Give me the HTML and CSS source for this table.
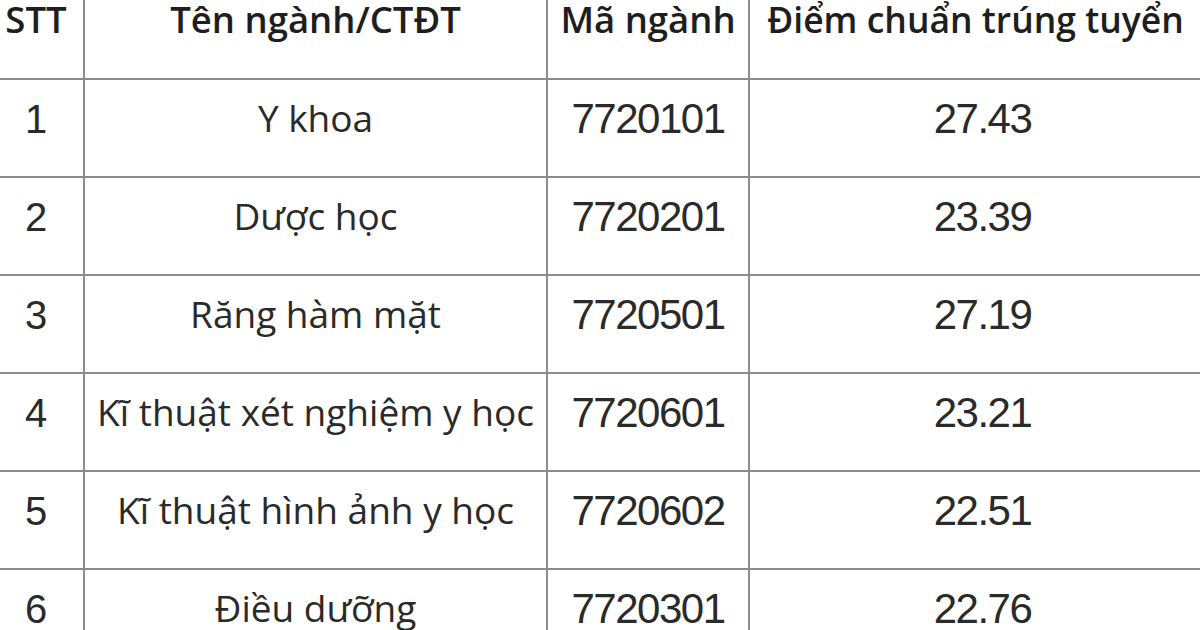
FILE: index.html
```html
<!DOCTYPE html>
<html lang="vi">
<head>
<meta charset="utf-8">
<link rel="stylesheet" href="styles.css">
</head>
<body>
<table class="scores">
  <colgroup>
    <col class="c-stt"><col class="c-name"><col class="c-code"><col class="c-score">
  </colgroup>
  <thead>
    <tr><th>STT</th><th>Tên ngành/CTĐT</th><th>Mã ngành</th><th class="score-head">Điểm chuẩn trúng tuyển</th></tr>
  </thead>
  <tbody>
    <tr><td>1</td><td class="name">Y khoa</td><td class="num">7720101</td><td class="num">27.43</td></tr>
    <tr><td>2</td><td class="name">Dược học</td><td class="num">7720201</td><td class="num">23.39</td></tr>
    <tr><td>3</td><td class="name">Răng hàm mặt</td><td class="num">7720501</td><td class="num">27.19</td></tr>
    <tr><td>4</td><td class="name">Kĩ thuật xét nghiệm y học</td><td class="num">7720601</td><td class="num">23.21</td></tr>
    <tr><td>5</td><td class="name">Kĩ thuật hình ảnh y học</td><td class="num">7720602</td><td class="num">22.51</td></tr>
    <tr><td>6</td><td class="name">Điều dưỡng</td><td class="num">7720301</td><td class="num">22.76</td></tr>
  </tbody>
</table>
</body>
</html>
```
FILE: styles.css
```css
html, body {
  margin: 0;
  padding: 0;
  background: #ffffff;
  overflow: hidden;
}
body {
  width: 1200px;
  height: 630px;
}
.scores {
  border-collapse: collapse;
  table-layout: fixed;
  width: 1228px;
  margin-left: -13px;
  color: #222222;
}
.c-stt { width: 96px; }
.c-name { width: 463px; }
.c-code { width: 202px; }
.c-score { width: 467px; }
.scores th, .scores td {
  border: 2px solid #8c8c8c;
  text-align: center;
  vertical-align: top;
  padding: 0;
  white-space: nowrap;
  overflow: visible;
}
.scores th {
  border-top: none;
  font-family: "Open Sans", sans-serif;
  font-weight: 600;
  font-size: 36.5px;
  line-height: 38px;
  height: 78px;
  color: #1e1e1e;
}
.scores th.score-head {
  font-size: 35.5px;
  padding-right: 14px;
}
.scores td {
  font-family: "Liberation Sans", Arial, sans-serif;
  font-size: 40px;
  line-height: 40px;
  padding-top: 19px;
  height: 77px;
  color: #2a2a2a;
}
.scores td.name {
  font-family: "Open Sans", sans-serif;
  font-size: 37px;
  padding-top: 18px;
  height: 78px;
}
.scores td.num {
  font-size: 42px;
  letter-spacing: -1.5px;
}
```
